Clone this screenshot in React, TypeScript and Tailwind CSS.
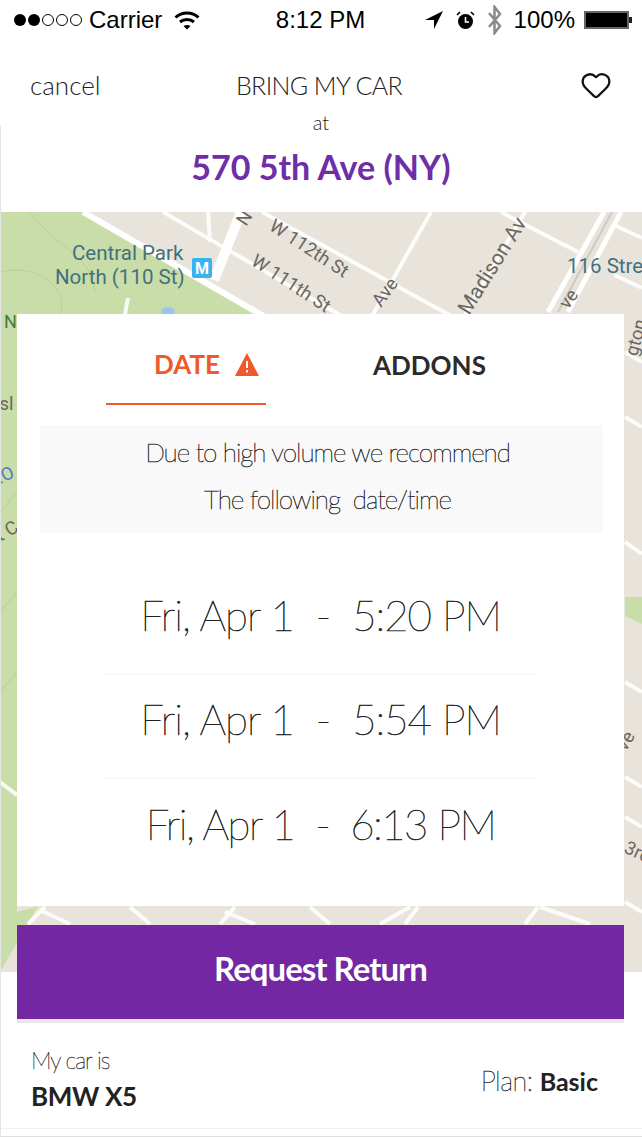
import { Heart } from 'lucide-react';

/* ─── Map backdrop ───────────────────────────────────────── */
const ROADS = [
  'M163 0 L345 106', 'M262 0 L455 106', 'M501 0 L578 40', 'M614 13 L642 26', 'M614 63 L642 76',
  'M431 0 L371 106', 'M525 0 L463 106', 'M208 0 L210 30', 'M128 86 L125 102',
  'M625 140 L642 150', 'M625 205 L642 215', 'M625 330 L642 342', 'M625 470 L642 480',
  'M625 565 L642 575', 'M625 605 L642 615', 'M0 570 L17 583',
];

const BOTTOM_ROADS = [
  'M45 695 L28 712', 'M40 698 L70 712', 'M130 695 L150 712', 'M220 712 L235 695', 'M225 700 L255 712',
  'M310 695 L330 712', 'M405 712 L418 695', 'M410 695 L380 712', 'M525 712 L538 695', 'M540 695 L590 712',
  'M625 690 L642 700',
];

function MapBackdrop() {
  return (
    <svg className="absolute left-0 top-0" width="642" height="760" viewBox="0 0 642 760">
      <rect width="642" height="760" fill="#e8e4dc" />
      <path d="M0 0 L83 0 L267 106 L17 106 L17 700 L38 694 L0 760 Z" fill="#c9dda8" />
      <path d="M625 385 L642 385 L642 412 L625 404 Z" fill="#c9dda8" />
      <path d="M30 0 C60 40 90 40 95 80 M0 60 C40 50 70 80 60 102 M0 300 L17 280 M0 400 L17 380 M0 480 L17 460" fill="none" stroke="#b9cf98" strokeWidth="1" />
      <g stroke="#ffffff" fill="none" strokeWidth="4" opacity="0.9">
        {ROADS.map(d => <path key={d} d={d} />)}
        {BOTTOM_ROADS.map(d => <path key={d} d={d} />)}
      </g>
      <path d="M83 0 L267 106" stroke="#ffffff" strokeWidth="6" />
      <path d="M241 0 L214 68" stroke="#ffffff" strokeWidth="10" />
      <path d="M604 0 L548 100 M621 0 L568 100" stroke="#ffffff" strokeWidth="5" />
      <path d="M612 0 L558 100" stroke="#cfcbc4" strokeWidth="2" />
      <ellipse cx="168" cy="100" rx="7" ry="5" fill="#9cc4e8" />
      <rect x="192" y="46" width="20" height="20" rx="2" fill="#37b4f0" />
      <text x="202" y="62" textAnchor="middle" fontSize="16" fontWeight="700" fill="#fff" fontFamily="Roboto, sans-serif">M</text>
      <g fontFamily="Roboto, sans-serif" fontSize="20.5" fill="#43707e">
        <text x="72" y="48">Central Park</text>
        <text x="55" y="72">North (110 St)</text>
        <text x="567" y="61">116 Stre</text>
      </g>
      <g fontFamily="Roboto, sans-serif" fontSize="18.5" fill="#6b6660">
        <text transform="translate(268 17) rotate(33)">W 112th St</text>
        <text transform="translate(250 52) rotate(33)">W 111th St</text>
        <text transform="translate(246 15) rotate(-57)">N</text>
        <text transform="translate(381 96) rotate(-54)">Ave</text>
        <text fontSize="21" transform="translate(469 104) rotate(-58)">Madison Av</text>
        <text transform="translate(568 98) rotate(-54)">ve</text>
        <text transform="translate(637 145) rotate(-75)">gton</text>
        <text transform="translate(626 540) rotate(-60)">ve</text>
        <text transform="translate(623 640) rotate(25)">3rc</text>
        <text x="-5" y="198">isl</text>
        <text transform="translate(0 330) rotate(-30)">t C</text>
      </g>
      <text x="4" y="116" fontFamily="Roboto, sans-serif" fontSize="18" fill="#3f7a3f">N</text>
      <text transform="translate(0 272) rotate(-25)" fontFamily="Roboto, sans-serif" fontSize="18" fill="#5a78c0">.O</text>
    </svg>
  );
}

/* ─── Status bar ─────────────────────────────────────────── */
function StatusBar() {
  return (
    <div className="grid h-[40px] grid-cols-[1fr_auto_1fr] items-center pl-[9px] pr-[10px] text-[24px] leading-none text-black [font-family:'Liberation_Sans',sans-serif]">
      <div className="flex items-center">
        <div className="ml-[5px] flex items-center gap-[2px]">
          <span className="h-[12px] w-[12px] rounded-full bg-black" />
          <span className="h-[12px] w-[12px] rounded-full bg-black" />
          <span className="h-[12px] w-[12px] rounded-full border border-black" />
          <span className="h-[12px] w-[12px] rounded-full border border-black" />
          <span className="h-[12px] w-[12px] rounded-full border border-black" />
        </div>
        <span className="ml-[7px]">Carrier</span>
        <svg className="ml-[12px]" width="26" height="19" viewBox="0 0 26 19" fill="none" stroke="#000" strokeWidth="3">
          <path d="M1.5 6.5 C8 0.5 18 0.5 24.5 6.5" />
          <path d="M6 11 C10 7.5 16 7.5 20 11" />
          <path d="M13 18.5 L9.5 15 C11.5 13.5 14.5 13.5 16.5 15 Z" fill="#000" stroke="none" />
        </svg>
      </div>
      <span>8:12 PM</span>
      <div className="flex items-center justify-end">
        <svg width="20" height="20" viewBox="0 0 20 20">
          <path d="M19 1 L1 10 L10 10 L10 19 Z" fill="#000" />
        </svg>
        <svg className="ml-[12px]" width="19" height="19" viewBox="0 0 19 19">
          <circle cx="9.5" cy="10.5" r="7.5" fill="#000" />
          <path d="M9.5 6 V11 H13" stroke="#fff" strokeWidth="1.6" fill="none" />
          <path d="M1 4 L4 1 M18 4 L15 1" stroke="#000" strokeWidth="1.6" />
        </svg>
        <svg className="ml-[12px]" width="15" height="30" viewBox="0 0 15 30" fill="none" stroke="#8a8a8a" strokeWidth="2.5">
          <path d="M2 8 L13 21 L7.5 28 V2 L13 9 L2 22" />
        </svg>
        <span className="ml-[12px]">100%</span>
        <div className="ml-[9px] flex items-center">
          <div className="h-[18px] w-[45px] border-2 border-[#666] bg-black" />
          <div className="h-[6px] w-[3px] bg-[#222]" />
        </div>
      </div>
    </div>
  );
}

function TimeRow({ date, time, last, tight }: { date: string; time: string; last?: boolean; tight?: boolean }) {
  return (
    <div className={`flex h-[104px] items-center justify-center whitespace-pre pb-[15px] text-[42px] font-thin leading-none text-[#222] antialiased [-webkit-text-stroke:0.6px_#222] ${tight ? 'tracking-[-1.5px]' : 'tracking-[-1px]'} ${last ? '' : 'border-b border-[#f6f6f6]'}`}>
      {date}  -  {time}
    </div>
  );
}

export default function App() {
  return (
    <div className="relative flex h-[1137px] w-[642px] flex-col overflow-hidden border-b border-[#dedede] bg-white [font-family:Lato,sans-serif]">
      <StatusBar />

      {/* Header */}
      <div className="h-[172px]">
        <div className="grid grid-cols-[1fr_auto_1fr] items-center pl-[30px] pr-[34px] pt-[25px]">
          <span className="text-[26px] font-light leading-[40px] text-[#222]">cancel</span>
          <span className="text-[25px] font-light leading-[40px] tracking-[-0.6px] text-[#222]">BRING MY CAR</span>
          <Heart className="-mr-[4px] justify-self-end" size={32} strokeWidth={1.7} color="#111" />
        </div>
        <p className="text-center text-[20px] font-light leading-[34px] text-[#222]">at</p>
        <p className="mt-[3px] text-center text-[34px] font-bold leading-[50px] text-[#6f2da8]">570 5th Ave (NY)</p>
      </div>

      {/* Map + floating card */}
      <div className="relative flex flex-col pl-[17px] pr-[18px] pt-[102px]">
        <MapBackdrop />

        <div className="relative h-[592px] bg-white">
          <div className="flex h-[91px] pl-[89px]">
            <div className="flex h-[91px] w-[160px] items-center gap-[15px] border-b-2 border-[#f0592a] pl-[48px] pt-[12px]">
              <span className="text-[26px] font-bold text-[#f0592a]">DATE</span>
              <svg width="24" height="23" viewBox="0 0 24 23">
                <path d="M12 0 L24 23 H0 Z" fill="#f0592a" />
                <path d="M12 8 V15 M12 17 V19.5" stroke="#fff" strokeWidth="2" />
              </svg>
            </div>
            <div className="ml-[107px] flex h-[91px] items-center pt-[12px] text-[26px] font-bold text-[#2b2b2b]">ADDONS</div>
          </div>

          <div className="ml-[23px] mr-[21px] mt-[20px] flex h-[108px] flex-col items-center justify-center bg-[#f9f9f9] pb-[6px] pl-[12px] text-[26px] font-thin leading-[47px] tracking-[-1px] text-[#222] antialiased [-webkit-text-stroke:0.5px_#222]">
            <span>Due to high volume we recommend</span>
            <span className="whitespace-pre">The following  date/time</span>
          </div>

          <div className="mx-[86px] mt-[38px]">
            <TimeRow date="Fri, Apr 1" time="5:20 PM" />
            <TimeRow date="Fri, Apr 1" time="5:54 PM" />
            <TimeRow date="Fri, Apr 1" time="6:13 PM" last tight />
          </div>
        </div>

        <button className="relative mt-[19px] flex h-[94px] items-center justify-center bg-[#7427a3] pb-[6px] text-[33px] font-bold tracking-[-1px] text-white">
          Request Return
        </button>
        <div className="relative h-[4px] bg-[#e9e6ec]" />

        {/* Footer */}
        <div className="relative -ml-[17px] -mr-[18px] flex h-[106px] items-center justify-between border-b border-[#f0f0f0] pl-[31px] pr-[44px] pt-[4px]">
          <div>
            <p className="text-[23px] font-thin leading-[36px] tracking-[-1px] text-[#222] antialiased [-webkit-text-stroke:0.4px_#222]">My car is</p>
            <p className="text-[26px] font-bold leading-[36px] tracking-[-0.3px] text-[#222]">BMW X5</p>
          </div>
          <p className="mt-[8px] text-[27px] tracking-[-0.5px] text-[#222]">
            <span className="font-thin antialiased [-webkit-text-stroke:0.4px_#222]">Plan: </span>
            <span className="text-[25px] font-bold tracking-normal">Basic</span>
          </p>
        </div>
      </div>

      {/* thin frame line down the left edge */}
      <div className="absolute bottom-0 left-0 top-[125px] w-px bg-[#e4e4e4]" />
    </div>
  );
}
